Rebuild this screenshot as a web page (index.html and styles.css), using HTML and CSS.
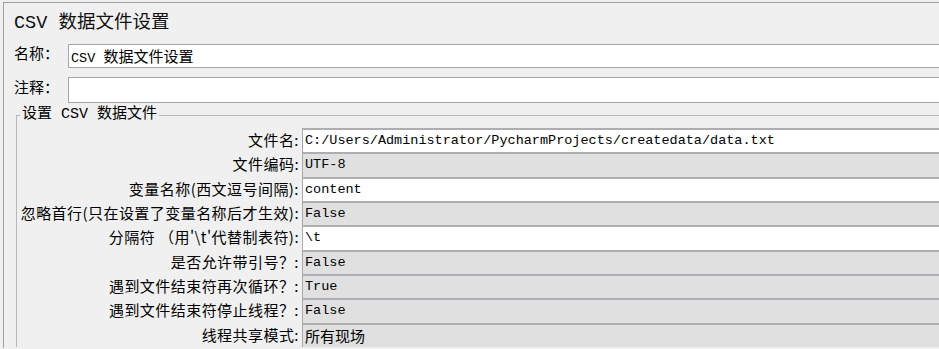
FILE: index.html
```html
<!DOCTYPE html>
<html lang="zh-CN">
<head>
<meta charset="utf-8">
<title>CSV 数据文件设置</title>
<link rel="stylesheet" href="styles.css">
</head>
<body>
<div class="panel">
  <h1 class="title">CSV 数据文件设置</h1>
  <div class="field name-field">
    <span class="field-label">名称：</span>
    <div class="text-input">CSV <span class="cjk">数据文件设置</span></div>
  </div>
  <div class="field comment-field">
    <span class="field-label">注释：</span>
    <div class="text-input tall"></div>
  </div>
  <fieldset class="group">
    <legend class="group-title">设置 CSV 数据文件</legend>
    <div class="props">
      <div class="prop-label">文件名:</div>
      <div class="prop-value editable">C:/Users/Administrator/PycharmProjects/createdata/data.txt</div>
      <div class="prop-label">文件编码:</div>
      <div class="prop-value">UTF-8</div>
      <div class="prop-label">变量名称(西文逗号间隔):</div>
      <div class="prop-value editable">content</div>
      <div class="prop-label">忽略首行(只在设置了变量名称后才生效):</div>
      <div class="prop-value">False</div>
      <div class="prop-label">分隔符 （用'\t'代替制表符):</div>
      <div class="prop-value editable">\t</div>
      <div class="prop-label">是否允许带引号？:</div>
      <div class="prop-value">False</div>
      <div class="prop-label">遇到文件结束符再次循环？:</div>
      <div class="prop-value">True</div>
      <div class="prop-label">遇到文件结束符停止线程？:</div>
      <div class="prop-value">False</div>
      <div class="prop-label">线程共享模式:</div>
      <div class="prop-value cjk">所有现场</div>
    </div>
  </fieldset>
</div>
</body>
</html>
```
FILE: styles.css
```css
html, body {
  margin: 0;
  padding: 0;
  background: #f0f0f0;
  overflow: hidden;
  height: 100%;
}

body {
  font-family: "Liberation Mono", "Noto Sans CJK SC", monospace;
  color: #000;
}

.panel {
  margin: 2px -20px 0 3px;
  border-top: 1px solid #a0a0a0;
  border-left: 1px solid #a0a0a0;
  padding-left: 10px;
  height: calc(100% - 3px);
  box-sizing: border-box;
  overflow: hidden;
}

.title {
  margin: 0;
  padding-top: 10px;
  height: 31px;
  box-sizing: border-box;
  font-size: 18.5px;
  line-height: 22px;
  font-weight: normal;
  color: #111;
}

.field {
  display: flex;
  align-items: center;
}

.name-field {
  height: 24px;
  margin-top: 10px;
}

.comment-field {
  height: 26px;
  margin-top: 9px;
}

.field-label {
  width: 54px;
  flex: none;
  font-size: 15px;
  line-height: 20px;
}

.text-input {
  flex: 1;
  height: 24px;
  box-sizing: border-box;
  background: #fff;
  border: 1px solid #a6a6a6;
  border-right: none;
  padding-left: 2px;
  font-size: 13.5px;
  line-height: 21px;
  white-space: nowrap;
}

.text-input.tall {
  height: 26px;
}

.cjk {
  font-size: 15px;
  font-family: "Noto Sans CJK SC", sans-serif;
}

.group {
  margin: 3px 0 0 2px;
  padding: 4px 0 0 0;
  border: none;
  border-top: 1px solid #b8b8b8;
  border-left: 1px solid #b8b8b8;
  min-width: 0;
}

.group-title {
  padding: 0 2px;
  margin-left: 3px;
  font-size: 15px;
  line-height: 18px;
}

.props {
  display: grid;
  grid-template-columns: 285px 1fr;
  grid-auto-rows: 24.35px;
}

.prop-label {
  text-align: right;
  padding-right: 3px;
  font-size: 15px;
  line-height: 24px;
  white-space: nowrap;
  font-family: "Noto Sans CJK SC", sans-serif;
  letter-spacing: 0.45px;
}

.prop-value {
  box-sizing: border-box;
  background: #e0e0e0;
  border-top: 2px solid #adadb2;
  border-left: 1px solid #a9a9ad;
  padding-left: 2px;
  font-size: 13.5px;
  line-height: 21px;
  white-space: nowrap;
}

.prop-value.editable {
  background: #fff;
}

.prop-value.cjk {
  font-size: 15px;
  font-family: "Noto Sans CJK SC", sans-serif;
}
```
